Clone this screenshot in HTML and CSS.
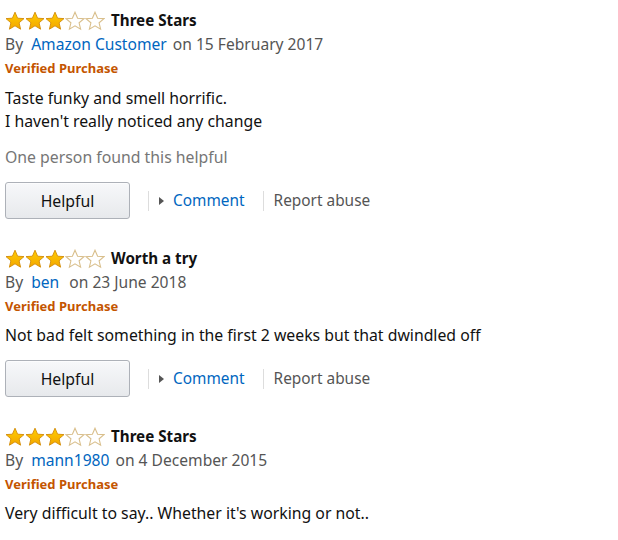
FILE: index.html
```html
<!DOCTYPE html>
<html>
  <head>
    <meta charset="utf-8"/>
    <title>Customer reviews</title>
    <link rel="stylesheet" href="styles.css">
  </head>
  <body>
    <svg width="0" height="0" class="defs">
      <defs>
        <linearGradient id="gold" x1="0" y1="0" x2="0" y2="1">
          <stop offset="0" stop-color="#ffce00"/>
          <stop offset="1" stop-color="#f3a600"/>
        </linearGradient>
        <polygon id="star" points="10,1.2 12.6,7.2 19,7.6 14.1,11.8 15.6,18.2 10,14.8 4.4,18.2 5.9,11.8 1,7.6 7.4,7.2"/>
      </defs>
    </svg>

    <div class="review">
      <div class="review-head">
        <span class="stars">
          <svg viewBox="0 0 100 20" width="100" height="20">
            <use href="#star" class="full"/>
            <use href="#star" class="full" x="20"/>
            <use href="#star" class="full" x="40"/>
            <use href="#star" class="empty" x="60"/>
            <use href="#star" class="empty" x="80"/>
          </svg>
        </span>
        <span class="title">Three Stars</span>
      </div>
      <div class="byline">By <a href="#" class="author">Amazon Customer</a> on 15 February 2017</div>
      <div class="verified">Verified Purchase</div>
      <div class="text first">Taste funky and smell horrific.<br/>I haven't really noticed any change</div>
      <div class="votes">One person found this helpful</div>
      <div class="actions">
        <button class="helpful">Helpful</button>
        <span class="sep"></span>
        <a href="#" class="comment"><span class="arrow"></span>Comment</a>
        <span class="sep"></span>
        <a href="#" class="report">Report abuse</a>
      </div>
    </div>

    <div class="review">
      <div class="review-head">
        <span class="stars">
          <svg viewBox="0 0 100 20" width="100" height="20">
            <use href="#star" class="full"/>
            <use href="#star" class="full" x="20"/>
            <use href="#star" class="full" x="40"/>
            <use href="#star" class="empty" x="60"/>
            <use href="#star" class="empty" x="80"/>
          </svg>
        </span>
        <span class="title">Worth a try</span>
      </div>
      <div class="byline">By <a href="#" class="author">ben</a>&nbsp; on 23 June 2018</div>
      <div class="verified">Verified Purchase</div>
      <div class="text">Not bad felt something in the first 2 weeks but that dwindled off</div>
      <div class="actions">
        <button class="helpful">Helpful</button>
        <span class="sep"></span>
        <a href="#" class="comment"><span class="arrow"></span>Comment</a>
        <span class="sep"></span>
        <a href="#" class="report">Report abuse</a>
      </div>
    </div>

    <div class="review">
      <div class="review-head">
        <span class="stars">
          <svg viewBox="0 0 100 20" width="100" height="20">
            <use href="#star" class="full"/>
            <use href="#star" class="full" x="20"/>
            <use href="#star" class="full" x="40"/>
            <use href="#star" class="empty" x="60"/>
            <use href="#star" class="empty" x="80"/>
          </svg>
        </span>
        <span class="title">Three Stars</span>
      </div>
      <div class="byline">By <a href="#" class="author">mann1980</a> on 4 December 2015</div>
      <div class="verified">Verified Purchase</div>
      <div class="text">Very difficult to say.. Whether it's working or not..</div>
    </div>
  </body>
</html>
```

FILE: styles.css
```css
body {
  background: #ffffff;
  color: #111111;
  font: 15.8px "Noto Sans", "Open Sans", sans-serif;
  line-height: 23px;
  margin: 0;
  padding: 9px 5px 0;
}
a {
  text-decoration: none;
}
.defs {
  position: absolute;
}
.review {
  margin-bottom: 28px;
}
.review-head {
  display: flex;
  align-items: center;
  gap: 6px;
  height: 23px;
}
.stars svg {
  display: block;
}
.full {
  fill: url(#gold);
  stroke: #d38b06;
  stroke-width: 0.9;
}
.empty {
  fill: #ffffff;
  stroke: #d9bf8c;
  stroke-width: 1.1;
}
.title {
  font-size: 15.2px;
  font-weight: bold;
}
.byline {
  color: #555555;
  font-size: 15.6px;
  line-height: 24px;
}
.author {
  color: #0066c0;
  margin: 0 2px 0 4px;
}
.verified {
  color: #c45500;
  font-size: 13px;
  font-weight: bold;
  line-height: 24px;
}
.text {
  margin-top: 6px;
}
.text.first {
  margin-top: 7px;
}
.votes {
  color: #767676;
  margin-top: 13px;
}
.actions {
  display: flex;
  align-items: center;
  margin-top: 13px;
  height: 37px;
  font-size: 15.4px;
}
.helpful {
  width: 125px;
  height: 37px;
  border: 1px solid #adb1b8;
  border-radius: 3px;
  background: linear-gradient(#f7f8fa, #e7e9ec);
  font: 15.8px "Noto Sans", "Open Sans", sans-serif;
  color: #111111;
  box-shadow: 0 1px 0 rgba(255,255,255,.6) inset;
}
.sep {
  width: 1px;
  height: 20px;
  background: #dddddd;
  margin: 0 10px 0 18px;
}
.comment {
  color: #0066c0;
  display: flex;
  align-items: center;
}
.arrow {
  width: 0;
  height: 0;
  border-left: 5px solid #555555;
  border-top: 4px solid transparent;
  border-bottom: 4px solid transparent;
  margin-right: 9px;
}
.report {
  color: #555555;
}
```
